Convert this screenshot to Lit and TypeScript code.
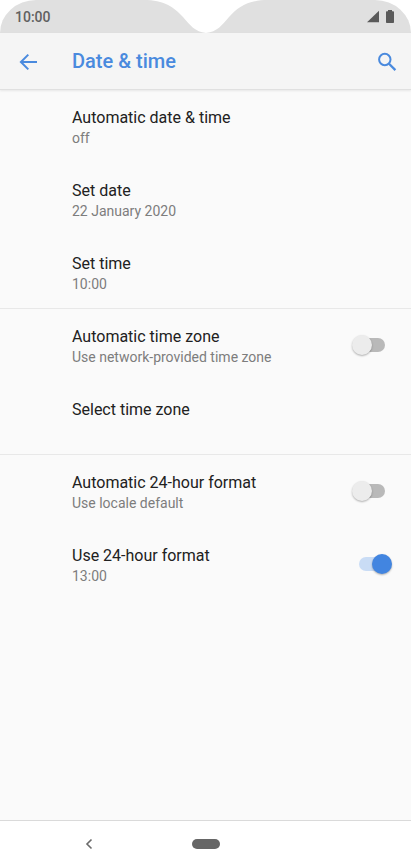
import { LitElement, html, css, nothing } from "lit";
import { customElement, property } from "lit/decorators.js";

interface Setting {
  id: string;
  title: string;
  summary?: string;
  toggle?: boolean;
  on?: boolean;
}

const groups: Setting[][] = [
  [
    { id: "auto-date", title: "Automatic date & time", summary: "off" },
    { id: "set-date", title: "Set date", summary: "22 January 2020" },
    { id: "set-time", title: "Set time", summary: "10:00" },
  ],
  [
    { id: "auto-zone", title: "Automatic time zone", summary: "Use network-provided time zone", toggle: true },
    { id: "select-zone", title: "Select time zone" },
  ],
  [
    { id: "auto-format", title: "Automatic 24-hour format", summary: "Use locale default", toggle: true },
    { id: "use-format", title: "Use 24-hour format", summary: "13:00", toggle: true, on: true },
  ],
];

@customElement("status-bar")
export class StatusBar extends LitElement {
  static styles = css`
    :host {
      display: grid;
      grid-template-columns: 1fr 124px 1fr;
      height: 33px;
      background: #e0e0e0;
      border-radius: 36px 36px 0 0 / 33px 33px 0 0;
      color: #606060;
    }
    .clock {
      padding: 1px 0 0 15px;
      font-size: 14px;
      line-height: 32px;
      font-weight: 500;
    }
    .notch {
      display: block;
    }
    .icons {
      display: flex;
      justify-content: flex-end;
      align-items: flex-start;
      gap: 7px;
      padding: 10px 17px 0 0;
    }
  `;

  render() {
    return html`
      <div class="clock">10:00</div>
      <svg class="notch" width="124" height="33" viewBox="0 0 124 33" aria-hidden="true">
        <path d="M0 0 C20 0 30 7 39 17 C46 25 51 32 62 33 C73 32 78 25 85 17 C94 7 104 0 124 0Z" fill="#fff" />
      </svg>
      <div class="icons">
        <svg width="12" height="13" viewBox="0 0 12 13" aria-label="Signal"><path d="M12 .8V12.300H0Z" fill="#5a5a5a" /></svg>
        <svg width="8" height="13" viewBox="0 0 8 13" aria-label="Battery">
          <path d="M2 0H6V1.200H7.200Q8 1.200 8 2V12.200Q8 13 7.200 13H.8Q0 13 0 12.200V2Q0 1.200 .8 1.200H2Z" fill="#5a5a5a" />
        </svg>
      </div>
    `;
  }
}

@customElement("setting-row")
export class SettingRow extends LitElement {
  @property({ attribute: false }) item!: Setting;

  static styles = css`
    :host {
      display: block;
      height: 73px;
    }
    .row {
      box-sizing: border-box;
      display: flex;
      width: 100%;
      height: 73px;
      padding: 17px 19px 0 72px;
      border: 0;
      background: none;
      font: inherit;
      text-align: left;
    }
    .text {
      flex: 1;
      min-width: 0;
    }
    .title,
    .summary {
      display: block;
    }
    .title {
      font-size: 16px;
      line-height: 21px;
      color: #212121;
    }
    .summary {
      font-size: 14px;
      line-height: 20px;
      color: #7d7d7d;
    }
    .switch {
      appearance: none;
      display: grid;
      align-items: center;
      justify-items: start;
      width: 33px;
      height: 20px;
      margin: 9px 7px 0 0;
    }
    .switch::before,
    .switch::after {
      content: "";
      grid-area: 1 / 1;
    }
    .switch::before {
      justify-self: end;
      width: 28px;
      height: 14px;
      border-radius: 7px;
      background: #b9b9b9;
    }
    .switch::after {
      width: 20px;
      height: 20px;
      border-radius: 50%;
      background: #ececec;
      box-shadow: 0 1px 2px rgba(0, 0, 0, 0.3);
    }
    .switch:checked {
      justify-items: end;
      margin-right: 0;
    }
    .switch:checked::before {
      justify-self: start;
      background: #c9dcf5;
    }
    .switch:checked::after {
      background: #4285e0;
    }
  `;

  render() {
    const { id, title, summary, toggle, on } = this.item;
    const text = html`
      <span class="text">
        <span class="title">${title}</span>
        ${summary ? html`<span class="summary">${summary}</span>` : nothing}
      </span>
    `;
    return toggle
      ? html`<label class="row" for=${id}>${text}<input class="switch" id=${id} type="checkbox" role="switch" .checked=${!!on} /></label>`
      : html`<button class="row" id=${id}>${text}</button>`;
  }
}

@customElement("app-root")
export class AppRoot extends LitElement {
  static styles = css`
    :host {
      display: flex;
      flex-direction: column;
      min-height: 100vh;
      background: #fff;
      font-family: Roboto, "Liberation Sans", sans-serif;
    }
    .bar {
      box-sizing: border-box;
      display: flex;
      align-items: center;
      height: 57px;
      padding: 1px 12px 0 16px;
      background: #f5f5f5;
      border-bottom: 1px solid #e0e0e0;
      box-shadow: 0 1px 2px rgba(0, 0, 0, 0.08);
      z-index: 1;
    }
    h1 {
      flex: 1;
      margin: 0 0 0 32px;
      font-size: 20px;
      line-height: 27px;
      font-weight: 500;
      color: #4a8ade;
    }
    button {
      display: grid;
      place-items: center;
      padding: 0;
      border: 0;
      background: none;
    }
    .action {
      width: 24px;
      height: 24px;
    }
    main {
      flex: 1;
      background: #fafafa;
    }
    section:not(:last-child) {
      box-shadow: inset 0 -1px #e8e8e8;
    }
    nav {
      box-sizing: border-box;
      display: grid;
      grid-template-columns: 1fr 56px 1fr;
      align-items: center;
      height: 48px;
      padding-bottom: 1px;
      border-top: 1px solid #dadada;
      background: #fff;
    }
    .back {
      width: 24px;
      height: 24px;
      justify-self: center;
    }
    .home {
      height: 24px;
    }
    .pill {
      width: 28px;
      height: 10px;
      border-radius: 5px;
      background: #666;
    }
  `;

  render() {
    return html`
      <status-bar></status-bar>
      <header class="bar">
        <button class="action" aria-label="Navigate up">
          <svg width="24" height="24" viewBox="0 0 24 24">
            <path d="M21 12H5.500M12.300 4.600L4.900 12L12.300 19.400" fill="none" stroke="#4a8ade" stroke-width="2" />
          </svg>
        </button>
        <h1>Date &amp; time</h1>
        <button class="action" aria-label="Search">
          <svg width="24" height="24" viewBox="0 0 24 24">
            <circle cx="9.800" cy="9.500" r="5.700" fill="none" stroke="#4a8ade" stroke-width="2" />
            <path d="M14 13.700L20.400 20.100" fill="none" stroke="#4a8ade" stroke-width="2.300" />
          </svg>
        </button>
      </header>
      <main>
        ${groups.map(
          (group) => html`<section>${group.map((item) => html`<setting-row .item=${item}></setting-row>`)}</section>`,
        )}
      </main>
      <nav aria-label="System">
        <button class="back" aria-label="Back">
          <svg width="24" height="24" viewBox="0 0 24 24">
            <path d="M14.500 7.500L10 12L14.500 16.500" fill="none" stroke="#6a6a6a" stroke-width="1.600" />
          </svg>
        </button>
        <button class="home" aria-label="Home"><span class="pill"></span></button>
      </nav>
    `;
  }
}
